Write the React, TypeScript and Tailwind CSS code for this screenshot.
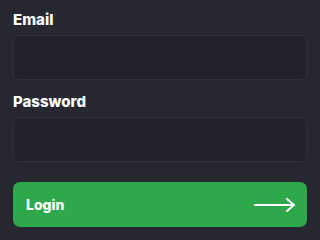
export default function App() {
  return (
    <div className="w-[320px] h-[240px] bg-[#272730] px-[13px] pt-[11px] font-['Inter',sans-serif] overflow-hidden">
      <label className="block text-[15px] font-extrabold text-white leading-[18px]">Email</label>
      <div className="mt-[6px] h-[45px] w-[294px] rounded-[5px] border border-[#31323b] bg-[#21222b]" />
      <label className="mt-[13px] block text-[15px] font-extrabold text-white leading-[18px]">Password</label>
      <div className="mt-[6px] h-[45px] w-[294px] rounded-[5px] border border-[#31323b] bg-[#21222b]" />
      <button className="mt-[20px] flex h-[45px] w-[294px] items-center justify-between rounded-[7px] bg-[#2fa84b] pl-[13px] pr-[11px]">
        <span className="text-[14px] font-extrabold text-white">Login</span>
        <svg width="42" height="16" viewBox="0 0 42 16" fill="none" stroke="white" strokeWidth="2" strokeLinecap="round" strokeLinejoin="round">
          <path d="M1 8h39" />
          <path d="M33 2l7 6-7 6" />
        </svg>
      </button>
    </div>
  );
}
